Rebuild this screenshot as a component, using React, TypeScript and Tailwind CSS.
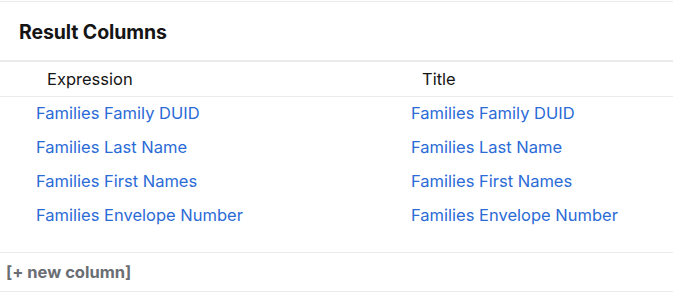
import React from "react";

const rows = [
  "Families Family DUID",
  "Families Last Name",
  "Families First Names",
  "Families Envelope Number",
];

const App = () => {
  return (
    <div
      className="w-[673px] h-[293px] bg-white text-[#151515]"
      style={{ fontFamily: 'Inter, "Liberation Sans", sans-serif' }}
    >
      <div className="h-px mt-px bg-[#ebebeb]" />
      <div className="h-[58px] flex items-center px-[19px] pt-[3px]">
        <h2 className="text-[19.5px] font-bold tracking-[-0.1px]">Result Columns</h2>
      </div>
      <div className="h-[2px] bg-[#ebebeb]" />
      <div className="grid grid-cols-[375px_1fr] h-[35px] items-center border-b border-[#ebebeb] text-[16.5px]">
        <div className="pl-[47px]">Expression</div>
        <div className="pl-[47px]">Title</div>
      </div>
      <div className="pb-[19px]">
        {rows.map((row) => (
          <div
            key={row}
            className="grid grid-cols-[375px_1fr] h-[34px] items-center text-[16.5px] text-[#2b6bd6] pb-[2px]"
          >
            <div className="pl-[36px]">{row}</div>
            <div className="pl-[36px]">{row}</div>
          </div>
        ))}
      </div>
      <div className="border-t border-b border-[#ebebeb] h-[40px] flex items-center px-[6px]">
        <span className="text-[16.5px] font-bold text-[#6a6e73]">[+ new column]</span>
      </div>
    </div>
  );
};

export default App;
